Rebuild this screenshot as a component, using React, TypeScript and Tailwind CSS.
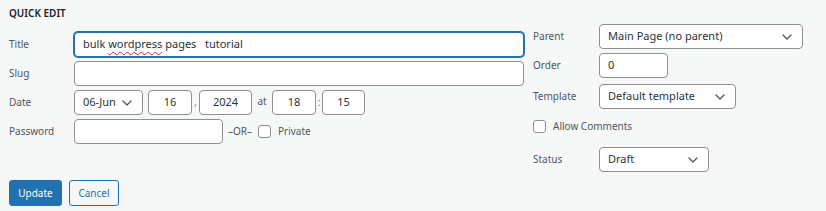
import React from 'react';

const font = { fontFamily: '"Noto Sans", "Open Sans", sans-serif' };

function Chevron() {
    return (
        <svg className="w-[10px] h-[6px] shrink-0" viewBox="0 0 10 6" fill="none" stroke="#50575e" strokeWidth={1.3}>
            <path d="M1 1l4 4 4-4" strokeLinecap="round" strokeLinejoin="round" />
        </svg>
    );
}

function Select({ value, className }: { value: string; className: string }) {
    return (
        <div className={`flex items-center justify-between h-[25px] pl-[8px] pr-[10px] bg-white border border-[#8c8f94] rounded-[4px] text-[11px] text-[#2c3338] ${className}`}>
            <span>{value}</span>
            <Chevron />
        </div>
    );
}

function Box({ value, className, center }: { value?: string; className: string; center?: boolean }) {
    return (
        <div className={`flex items-center h-[25px] px-[8px] bg-white border border-[#8c8f94] rounded-[4px] text-[11px] text-[#2c3338] ${center ? 'justify-center' : ''} ${className}`}>
            {value}
        </div>
    );
}

function Checkbox() {
    return <div className="w-[13px] h-[13px] bg-white border border-[#8c8f94] rounded-[3px] shrink-0" />;
}

export default function App() {
    return (
        <div style={font} className="w-[826px] h-[211px] bg-[#f6f7f7] px-[9px] overflow-hidden">
            {/* Heading */}
            <div className="pt-[5px] h-[24px] text-[10px] leading-[16px] font-semibold text-[#1d2327]">QUICK EDIT</div>

            <div className="flex items-start">
                {/* Left column */}
                <div className="w-[515px] pt-[8px] flex flex-col gap-[4px]">
                    <div className="flex items-center">
                        <div className="w-[65px] text-[10px] text-[#50575e]">Title</div>
                        <div className="flex-1 flex items-center h-[25px] px-[8px] bg-white border border-[#2271b1] shadow-[0_0_0_1px_#2271b1] rounded-[4px] text-[11px] text-[#2c3338] whitespace-pre">
                            <span>bulk </span>
                            <span className="underline decoration-wavy decoration-[#e02020] decoration-1 underline-offset-[3px]">wordpress</span>
                            <span> pages   tutorial</span>
                        </div>
                    </div>
                    <div className="flex items-center">
                        <div className="w-[65px] text-[10px] text-[#50575e]">Slug</div>
                        <Box className="flex-1" />
                    </div>
                    <div className="flex items-center">
                        <div className="w-[65px] text-[10px] text-[#50575e]">Date</div>
                        <Select value="06-Jun" className="w-[69px]" />
                        <Box value="16" center className="w-[44px] ml-[5px]" />
                        <span className="w-[7px] text-center text-[10px] text-[#8c8f94]">,</span>
                        <Box value="2024" center className="w-[53px]" />
                        <span className="w-[20px] text-center text-[10px] text-[#50575e] -mt-[3px]">at</span>
                        <Box value="18" center className="w-[44px]" />
                        <span className="w-[6px] text-center text-[10px] text-[#9b6b9e]">:</span>
                        <Box value="15" center className="w-[43px]" />
                    </div>
                    <div className="flex items-center">
                        <div className="w-[65px] text-[10px] text-[#50575e]">Password</div>
                        <Box className="w-[149px]" />
                        <span className="ml-[5px] text-[10px] text-[#50575e]">–OR–</span>
                        <div className="ml-[6px] flex items-center gap-[7px]">
                            <Checkbox />
                            <span className="text-[10px] text-[#50575e]">Private</span>
                        </div>
                    </div>
                </div>

                {/* Right column */}
                <div className="ml-[9px] flex flex-col">
                    <div className="flex items-center">
                        <div className="w-[66px] text-[10px] text-[#50575e]">Parent</div>
                        <Select value="Main Page (no parent)" className="w-[204px]" />
                    </div>
                    <div className="flex items-center mt-[4px]">
                        <div className="w-[66px] text-[10px] text-[#50575e]">Order</div>
                        <Box value="0" className="w-[69px]" />
                    </div>
                    <div className="flex items-center mt-[6px]">
                        <div className="w-[66px] text-[10px] text-[#50575e]">Template</div>
                        <Select value="Default template" className="w-[137px]" />
                    </div>
                    <div className="flex items-center gap-[7px] mt-[10px] h-[15px]">
                        <Checkbox />
                        <span className="text-[10px] text-[#50575e]">Allow Comments</span>
                    </div>
                    <div className="flex items-center mt-[13px]">
                        <div className="w-[66px] text-[10px] text-[#50575e]">Status</div>
                        <Select value="Draft" className="w-[110px]" />
                    </div>
                </div>
            </div>

            {/* Buttons */}
            <div className="flex items-center gap-[7px] mt-[8px]">
                <button className="h-[26px] w-[53px] rounded-[3px] bg-[#2271b1] border border-[#2271b1] text-white text-[10px]">Update</button>
                <button className="h-[26px] w-[50px] rounded-[3px] bg-[#f6f7f7] border border-[#2271b1] text-[#2271b1] text-[10px]">Cancel</button>
            </div>
        </div>
    );
}
